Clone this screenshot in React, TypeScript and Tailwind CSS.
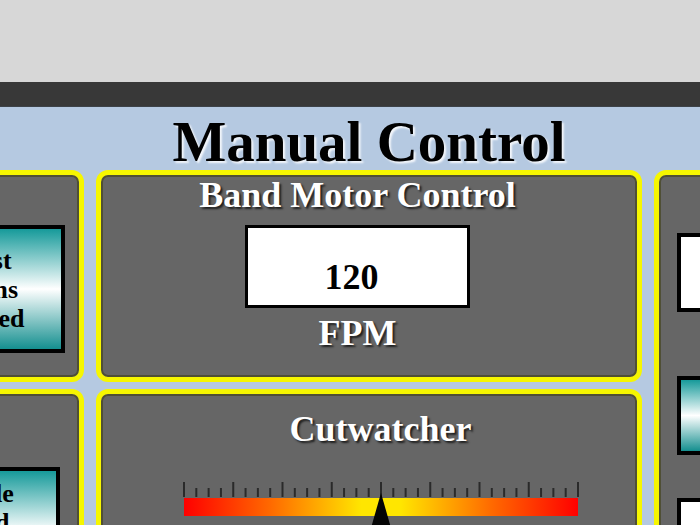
const serif = "font-['Liberation_Serif','Times_New_Roman',serif]";
const whiteLabel =
  "font-['Liberation_Serif','Times_New_Roman',serif] text-[36px] leading-none font-bold text-white [text-shadow:2px_2px_2px_#1f1f1f]";

function Panel({ className = "", children }: { className?: string; children?: React.ReactNode }) {
  return (
    <div
      className={`rounded-[12px] border-[5px] border-[#f6f600] bg-[#666666] shadow-[inset_0_0_0_2px_#4f4f35] ${className}`}
    >
      {children}
    </div>
  );
}

function TealButton({
  lines,
  className = "",
}: {
  lines: string[];
  className?: string;
}) {
  return (
    <div
      className={`flex flex-col border-4 border-black bg-[linear-gradient(to_bottom,#169a9a,#ffffff_50%,#148f8f)] text-center text-[26px] leading-[29px] font-bold text-black ${serif} ${className}`}
    >
      {lines.map((l) => (
        <span key={l}>{l}</span>
      ))}
    </div>
  );
}

function Gauge() {
  const step = 394 / 32;
  const ticks = Array.from({ length: 33 }, (_, i) => i);
  return (
    <svg width="396" height="60" viewBox="0 0 396 60" className="mt-[35px] block">
      <defs>
        <linearGradient id="heat" x1="0" x2="1" y1="0" y2="0">
          <stop offset="0" stopColor="#ff0000" />
          <stop offset="0.22" stopColor="#ff6a00" />
          <stop offset="0.45" stopColor="#ffe600" />
          <stop offset="0.55" stopColor="#ffe600" />
          <stop offset="0.78" stopColor="#ff6a00" />
          <stop offset="1" stopColor="#ff0000" />
        </linearGradient>
      </defs>
      {ticks.map((i) => (
        <line
          key={i}
          x1={1 + i * step}
          x2={1 + i * step}
          y1={i % 4 === 0 ? 0 : 6}
          y2={15}
          stroke="#2a2a2a"
          strokeWidth="2"
        />
      ))}
      <rect x="1" y="16" width="394" height="18" fill="url(#heat)" />
      <polygon points="198,11 184,60 212,60" fill="#050505" />
    </svg>
  );
}

export default function App() {
  return (
    <div className="flex h-[525px] w-[700px] flex-col overflow-hidden">
      <div className="h-[82px] shrink-0 bg-[#d7d7d7]" />
      <div className="h-[25px] shrink-0 border-b border-[#3d4248] bg-[#383838]" />

      <main className="flex-1 bg-[#b5c9e1] pt-[6px]">
        <div className="-ml-[116px] grid grid-cols-[200px_546px_170px] grid-rows-[57px_212px_200px] gap-x-[12px]">
          <h1
            className={`col-start-2 row-start-1 text-center text-[57px] leading-none font-bold text-black [text-shadow:2px_2px_2px_#f4f7fb] ${serif}`}
          >
            Manual Control
          </h1>

          {/* left column, cropped at the window edge */}
          <Panel className="col-start-1 row-start-2 flex justify-end pt-[50px] pr-[14px]">
            <TealButton
              lines={["Rest", "Arms", "Raised"]}
              className="h-[128px] w-[156px] justify-center"
            />
          </Panel>
          <Panel className="col-start-1 row-start-3 mt-[7px] flex justify-end pt-[73px] pr-[19px]">
            <TealButton lines={["Blade", "Hold"]} className="h-[128px] w-[156px] pt-[8px]" />
          </Panel>

          <Panel className="col-start-2 row-start-2 flex flex-col items-center pt-[2px] pr-[23px]">
            <h2 className={whiteLabel}>Band Motor Control</h2>
            <div
              className={`mt-[12px] h-[83px] w-[225px] border-[3px] border-black bg-white pt-[31px] pr-[12px] text-center text-[36px] leading-none font-bold text-black ${serif}`}
            >
              120
            </div>
            <p className={`mt-[7px] ${whiteLabel}`}>FPM</p>
          </Panel>

          <Panel className="col-start-2 row-start-3 mt-[7px] flex flex-col items-center pt-[17px] pl-[23px]">
            <h2 className={whiteLabel}>Cutwatcher</h2>
            <Gauge />
          </Panel>

          <Panel className="col-start-3 row-span-2 row-start-2 flex flex-col pt-[58px] pl-[18px]">
            <div className="h-[85px] w-[150px] border-4 border-black bg-white" />
            <TealButton lines={[""]} className="mt-[64px] h-[85px] w-[150px]" />
            <div className="mt-[43px] h-[85px] w-[150px] border-4 border-black bg-white" />
          </Panel>
        </div>
      </main>
    </div>
  );
}
